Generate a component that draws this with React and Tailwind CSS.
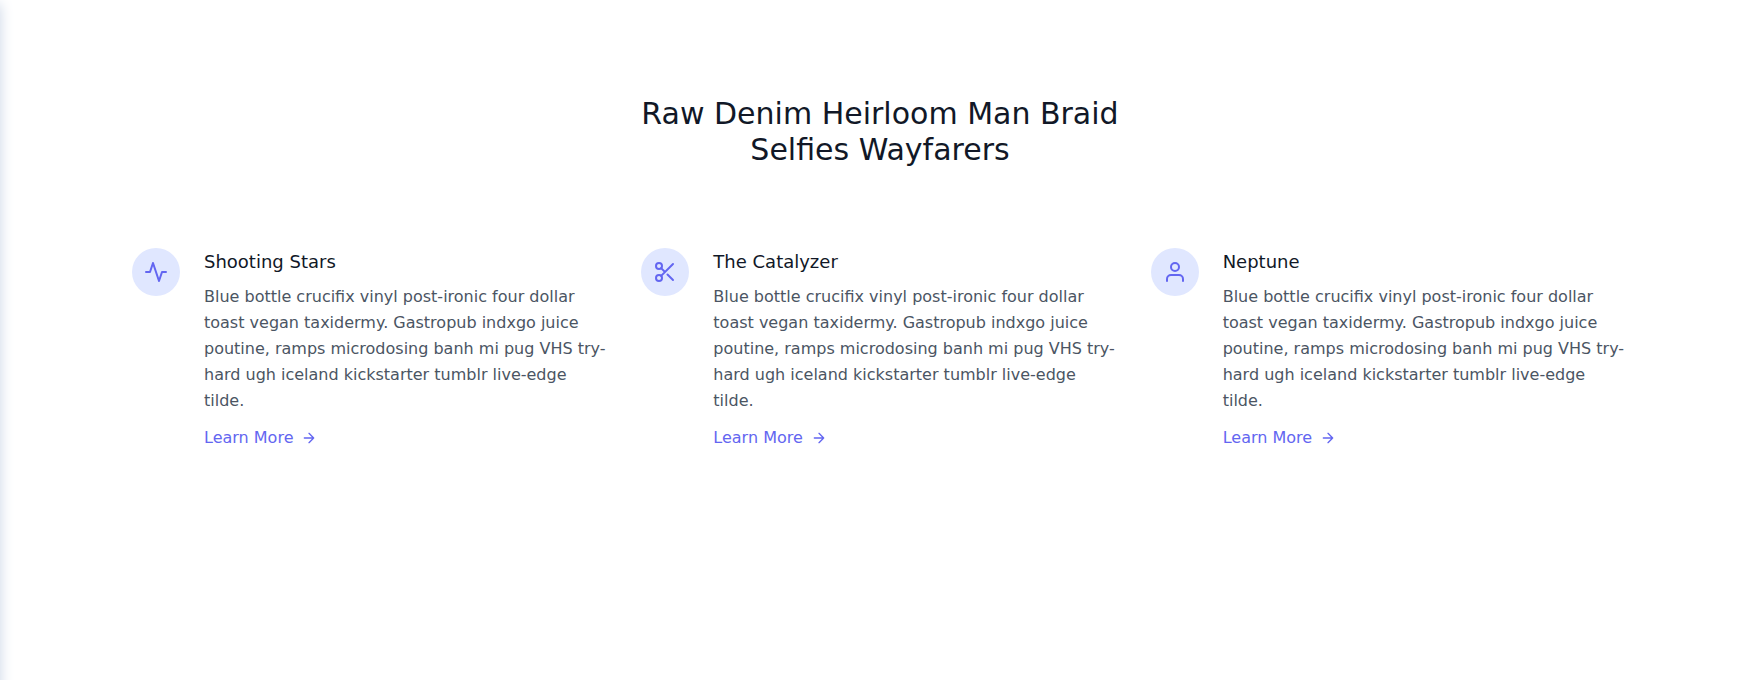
import React from "react";

const icons = {
  activity: (
    <path d="M22 12h-4l-3 9L9 3l-3 9H2" />
  ),
  scissors: (
    <>
      <circle cx="6" cy="6" r="3" />
      <circle cx="6" cy="18" r="3" />
      <path d="M20 4L8.12 15.88M14.47 14.48L20 20M8.12 8.12L12 12" />
    </>
  ),
  user: (
    <>
      <path d="M20 21v-2a4 4 0 00-4-4H8a4 4 0 00-4 4v2" />
      <circle cx="12" cy="7" r="4" />
    </>
  ),
};

const features = [
  { title: "Shooting Stars", icon: "activity" },
  { title: "The Catalyzer", icon: "scissors" },
  { title: "Neptune", icon: "user" },
];

function Icon({ className, children }) {
  return (
    <svg
      fill="none"
      stroke="currentColor"
      strokeLinecap="round"
      strokeLinejoin="round"
      strokeWidth="2"
      className={className}
      viewBox="0 0 24 24"
    >
      {children}
    </svg>
  );
}

function Feature({ title, icon }) {
  return (
    <div className="flex w-1/3 p-4">
      <div className="mb-4 inline-flex h-12 w-12 shrink-0 items-center justify-center rounded-full bg-[#e0e7ff] text-[#6366f1]">
        <Icon className="h-6 w-6">{icons[icon]}</Icon>
      </div>
      <div className="grow pl-6">
        <h2 className="mb-2 text-lg font-medium text-[#111827]">{title}</h2>
        <p className="text-base leading-[26px] text-[#4b5563]">
          Blue bottle crucifix vinyl post-ironic four dollar toast vegan taxidermy. Gastropub indxgo
          juice poutine, ramps microdosing banh mi pug VHS try-hard ugh iceland kickstarter tumblr
          live-edge tilde.
        </p>
        <a className="mt-3 inline-flex items-center text-[#6366f1]">
          Learn More
          <Icon className="ml-2 h-4 w-4">
            <path d="M5 12h14M12 5l7 7-7 7" />
          </Icon>
        </a>
      </div>
    </div>
  );
}

export default function App() {
  return (
    <div className="relative h-[680px] overflow-hidden bg-white font-['DejaVu_Sans',sans-serif]">
      <div className="absolute -left-10 top-0 h-[720px] w-10 shadow-[0_4px_14px_0_#cbd5e6]" />
      <section className="mx-auto max-w-[1536px] px-5 py-24 text-[#4b5563]">
        <h1 className="mb-16 text-center text-3xl font-medium text-[#111827]">
          Raw Denim Heirloom Man Braid
          <br />
          Selfies Wayfarers
        </h1>
        <div className="-mx-4 flex">
          {features.map((f) => (
            <Feature key={f.title} {...f} />
          ))}
        </div>
      </section>
    </div>
  );
}
